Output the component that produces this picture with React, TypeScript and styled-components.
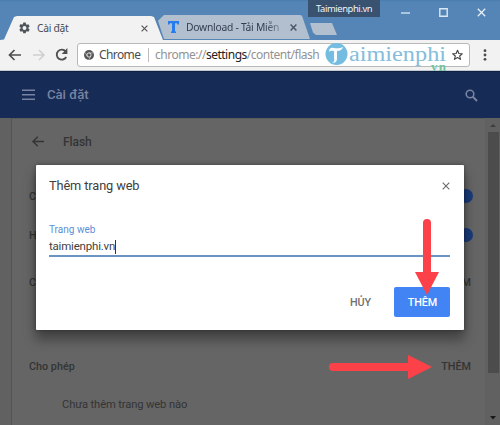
import React from "react";
import styled, { createGlobalStyle } from "styled-components";

const Global = createGlobalStyle`
  * { box-sizing: border-box; }
  body { margin: 0; overflow: hidden; font-family: Roboto, "Noto Sans", sans-serif; }
`;

const Window = styled.div`
  position: relative;
  width: 500px;
  height: 425px;
  overflow: hidden;
  display: flex;
  flex-direction: column;
  background: #656565;
`;

const TabStrip = styled.header`
  height: 40px;
  flex: none;
  display: flex;
  align-items: flex-end;
  background: linear-gradient(#4a7baf 0, #5585b7 2px, #5585b7 100%);
  font-family: "Noto Sans", "Open Sans", sans-serif;
`;

const Tab = styled.div<{ $active?: boolean }>`
  display: flex;
  align-items: center;
  flex: none;
  height: 24px;
  width: ${(p) => (p.$active ? 163 : 153)}px;
  margin-left: ${(p) => (p.$active ? 0 : -6)}px;
  margin-bottom: ${(p) => (p.$active ? 0 : 1)}px;
  padding-left: ${(p) => (p.$active ? 19 : 11)}px;
  color: ${(p) => (p.$active ? "#474b50" : "#333f50")};
  background: ${(p) => (p.$active ? "#f2f2f2" : "#b1bfcf")};
  clip-path: ${(p) =>
    p.$active
      ? "polygon(0 100%, 4px 98%, 14px 4%, 17px 0, 151px 0, 154px 4%, 163px 100%)"
      : "polygon(1px 24%, 7px 0, 143px 0, 145px 3%, 153px 100%, 7px 100%)"};
  font-size: 10.3px;
`;

const TabTitle = styled.span<{ $w: number; $fade?: boolean }>`
  width: ${(p) => p.$w}px;
  margin-left: 7px;
  white-space: nowrap;
  line-height: 20px;
  letter-spacing: ${(p) => (p.$fade ? -0.25 : -0.3)}px;
  ${(p) => p.$fade && "mask-image: linear-gradient(90deg, #000 82%, rgba(0, 0, 0, 0.3) 100%);"}
`;

const NewTab = styled.div`
  width: 27px;
  height: 12px;
  margin: 0 0 5px 0;
  background: #b1bfcf;
  clip-path: polygon(0 0, 22px 0, 27px 100%, 6px 100%, 3px 80%);
`;

const WindowControls = styled.div`
  margin-left: auto;
  align-self: flex-start;
  display: flex;
  align-items: center;
  gap: 29px;
  padding: 8px 14px 0 0;
`;

const Tooltip = styled.div`
  position: absolute;
  left: 308px;
  top: 0;
  width: 72px;
  height: 17px;
  padding-left: 8px;
  background: #39526f;
  color: #f1f4f8;
  font: 9.4px/18px "Noto Sans", sans-serif;
  letter-spacing: -0.4px;
`;

const Toolbar = styled.nav`
  height: 31px;
  flex: none;
  display: flex;
  align-items: center;
  padding: 0 0 1px 8px;
  background: #f2f2f2;
  border-bottom: 1px solid #c3cad5;
`;

const NavIcons = styled.div`
  width: 69px;
  display: flex;
  align-items: center;
  gap: 10px;
`;

const Omnibox = styled.div`
  width: 393px;
  height: 24px;
  display: flex;
  align-items: center;
  padding: 0 6px;
  background: #fff;
  border: 1px solid #b9b9b9;
  border-radius: 3px;
  font: 12px/20px "Noto Sans", "Open Sans", sans-serif;
  color: #4c4c4c;
`;

const Scheme = styled.span`
  width: 50px;
  margin-left: 5px;
  border-right: 1px solid #bdbdbd;
  line-height: 14px;
  letter-spacing: -0.6px;
`;

const Url = styled.span`
  margin-left: 6px;
  color: #929292;
  white-space: nowrap;
  letter-spacing: -0.49px;
  b { font-weight: 400; color: #222; }
`;

const Star = styled.svg`
  margin-left: auto;
`;

const Menu = styled.svg`
  margin-left: 13px;
`;

const Watermark = styled.div`
  position: absolute;
  left: 325px;
  top: 42px;
  width: 124px;
  height: 34px;
  font-family: "Liberation Serif", serif;
`;

const AppBar = styled.div`
  height: 47px;
  flex: none;
  display: flex;
  align-items: center;
  padding: 0 22px;
  background: #172b57;
  border-top: 1px solid #10203f;
  color: #7783a0;
`;

const AppTitle = styled.h1`
  margin: -2px auto 0 12px;
  font-size: 13.2px;
  font-weight: 500;
  letter-spacing: -0.05px;
`;

const Body = styled.main`
  flex: 1;
  display: flex;
  min-height: 0;
`;

const Gutter = styled.div<{ $right?: boolean }>`
  width: ${(p) => (p.$right ? 2 : 12)}px;
  background: #616161;
  border-right: ${(p) => (p.$right ? "0" : "1px solid #545454")};
`;

const Panel = styled.section`
  flex: 1;
  display: flex;
  flex-direction: column;
  padding: 0 15px 0 17px;
  border-top: 1px solid #5b5b5b;
  background: #656565;
  color: #343434;
  font-size: 12px;
`;

const Heading = styled.div`
  display: flex;
  align-items: center;
  height: 45px;
  gap: 19px;
  padding-left: 3px;
  font-size: 12px;
  font-weight: 500;
  letter-spacing: -0.05px;
`;

const Setting = styled.div<{ $h: number }>`
  display: flex;
  align-items: center;
  justify-content: space-between;
  height: ${(p) => p.$h}px;
  flex: none;
  font-weight: 500;
  font-size: 10.8px;
`;

const AddLink = styled.span`
  margin-right: -1px;
`;

const Toggle = styled.i`
  width: 14px;
  height: 14px;
  margin-right: -3px;
  border-radius: 50%;
  background: #1a3a79;
`;

const Empty = styled.div`
  padding: 0 0 0 33px;
  margin-top: -12px;
  font-size: 11.2px;
  line-height: 14px;
  letter-spacing: -0.13px;
`;

const Scrollbar = styled.div`
  width: 13px;
  display: flex;
  flex-direction: column;
  align-items: center;
  padding: 5px 1px 5px 0;
  background: #616161;
`;

const Thumb = styled.div`
  width: 11px;
  height: 241px;
  margin: 5px 0 auto;
  flex: none;
  background: #4c4c4c;
`;

const Dialog = styled.div`
  position: absolute;
  left: 36px;
  top: 165px;
  width: 428px;
  height: 165px;
  padding: 0 14px 0 13px;
  display: flex;
  flex-direction: column;
  background: #fff;
  border-radius: 1px;
  box-shadow: 0 9px 12px 1px rgba(0, 0, 0, 0.34), 0 0 4px rgba(0, 0, 0, 0.35);
`;

const DialogHead = styled.div`
  display: flex;
  align-items: center;
  justify-content: space-between;
  height: 41px;
  color: #3e3e3e;
  font-size: 12.8px;
  letter-spacing: -0.12px;
`;

const Field = styled.label`
  margin-top: 17px;
  display: flex;
  flex-direction: column;
  height: 34px;
  border-bottom: 2px solid #6b94c3;
  color: #5c8fd6;
  font-size: 10px;
  line-height: 14px;
  letter-spacing: 0.02px;
`;

const Value = styled.span`
  align-self: flex-start;
  margin-top: 3px;
  height: 14px;
  line-height: 13px;
  border-right: 1px solid #333;
  color: #3f3f3f;
  font-size: 11.5px;
  letter-spacing: -0.2px;
`;

const Actions = styled.div`
  display: flex;
  justify-content: flex-end;
  gap: 12px;
  margin-top: 30px;
`;

const Button = styled.button<{ $primary?: boolean }>`
  width: ${(p) => (p.$primary ? 56 : 44)}px;
  height: 30px;
  border: 0;
  padding: 0 0 0 1px;
  border-radius: 2px;
  background: ${(p) => (p.$primary ? "#4284f3" : "transparent")};
  color: ${(p) => (p.$primary ? "#fff" : "#707070")};
  font: 500 10.8px Roboto, sans-serif;
  letter-spacing: -0.1px;
`;

const Pointer = styled.svg<{ $x: number; $y: number }>`
  position: absolute;
  left: ${(p) => p.$x}px;
  top: ${(p) => p.$y}px;
  fill: #fd4148;
`;

const Cross = ({ size, color, width = 1.4 }: { size: number; color: string; width?: number }) => (
  <svg width={size} height={size} viewBox="0 0 8 8" stroke={color} strokeWidth={width}>
    <path d="M.7.7l6.6 6.6M7.3.7L.7 7.3" />
  </svg>
);

export default function App() {
  return (
    <>
      <Global />
      <Window>
        <TabStrip>
          <Tab $active>
            <svg width="11" height="12" viewBox="2 2 20 20" fill="#4f555b">
              <path d="M19.14 12.94c.04-.3.06-.61.06-.94s-.02-.64-.07-.94l2.03-1.58a.49.49 0 0 0 .12-.61l-1.92-3.32a.49.49 0 0 0-.59-.22l-2.39.96a7 7 0 0 0-1.62-.94l-.36-2.54A.48.48 0 0 0 13.92 2h-3.84a.48.48 0 0 0-.48.41l-.36 2.54a7 7 0 0 0-1.62.94l-2.39-.96a.49.49 0 0 0-.59.22L2.72 8.47a.49.49 0 0 0 .12.61l2.03 1.58a7 7 0 0 0 0 2.28l-2.03 1.58a.49.49 0 0 0-.12.61l1.92 3.32c.12.22.37.29.59.22l2.39-.96c.5.38 1.03.7 1.62.94l.36 2.54c.05.24.24.41.48.41h3.84c.24 0 .44-.17.48-.41l.36-2.54a7 7 0 0 0 1.62-.94l2.39.96c.22.08.47 0 .59-.22l1.92-3.32a.49.49 0 0 0-.12-.61zM12 15.6a3.6 3.6 0 1 1 0-7.2 3.6 3.6 0 0 1 0 7.2z" />
            </svg>
            <TabTitle $w={104}>Cài đặt</TabTitle>
            <Cross size={7} color="#5a5a5a" />
          </Tab>
          <Tab>
            <svg width="11" height="12" viewBox="0 0 11 12" fill="#267bed">
              <path d="M0 0h11v3.6H9.6L9 2.2H7v8l1 .6V12H3v-1.2l1-.6v-8H2l-.6 1.4H0z" />
            </svg>
            <TabTitle $w={96} $fade>Download - Tải Miễn</TabTitle>
            <svg width="15" height="7" viewBox="-8 0 15 7" stroke="#4b535f" strokeWidth="1.4">
              <path d="M.6.6l5.8 5.8M6.4.6L.6 6.4" />
            </svg>
          </Tab>
          <NewTab />
          <WindowControls>
            <svg width="9" height="9"><path d="M0 5h9" stroke="#dce8f4" strokeWidth="1.3" /></svg>
            <svg width="9" height="9"><path d="M.8.8h7.4v7.4H.8z" fill="none" stroke="#dce8f4" strokeWidth="1.4" /></svg>
            <Cross size={9} color="#e7f0f8" width={1.1} />
          </WindowControls>
        </TabStrip>
        <Tooltip>Taimienphi.vn</Tooltip>

        <Toolbar>
          <NavIcons>
            <svg width="14" height="12" fill="none" stroke="#4f4f4f" strokeWidth="1.7"><path d="M6.5 1L1.5 6l5 5M2 6h11" /></svg>
            <svg width="13" height="12" fill="none" stroke="#cfcfcf" strokeWidth="1.5"><path d="M7 1l5 5-5 5M11.5 6H1" /></svg>
            <svg width="13" height="13" fill="none" stroke="#4f4f4f" strokeWidth="1.8"><path d="M11.2 9A5 5 0 1 1 10.7 3.5" /><path d="M12.4 0v6H6.7z" fill="#4f4f4f" stroke="none" /></svg>
          </NavIcons>
          <Omnibox>
            <svg width="10" height="10" viewBox="0 0 10 10">
              <circle cx="5" cy="5" r="5" fill="#555" />
              <circle cx="5" cy="5" r="2.1" fill="#555" stroke="#fff" strokeWidth=".8" />
              <path d="M5 2.9h4.5M3.2 6L1 2.4M6.8 6L4.7 10" stroke="#ddd" strokeWidth=".6" />
            </svg>
            <Scheme>Chrome</Scheme>
            <Url>chrome://<b>settings</b>/content/flash</Url>
            <Star width="11" height="12" viewBox="0 0 12 12" fill="none" stroke="#414141" strokeWidth="1.2" strokeLinejoin="round">
              <path d="M6 .9l1.5 3.4 3.7.3-2.8 2.5.9 3.7L6 8.8l-3.3 2 .9-3.7L.8 4.6l3.7-.3z" />
            </Star>
          </Omnibox>
          <Menu width="4" height="12" fill="#4c4c4c"><circle cx="2" cy="1.7" r="1.4" /><circle cx="2" cy="6" r="1.4" /><circle cx="2" cy="10.3" r="1.4" /></Menu>
        </Toolbar>

        <AppBar>
          <svg width="13" height="12" stroke="#7783a0" strokeWidth="1.5"><path d="M0 1.3h13M0 5.8h13M0 10.3h13" /></svg>
          <AppTitle>Cài đặt</AppTitle>
          <svg width="13" height="13" fill="none" stroke="#7783a0"><circle cx="5" cy="5" r="3.8" strokeWidth="1.6" /><path d="M7.8 7.8l4.2 4.2" strokeWidth="2" /></svg>
        </AppBar>

        <Body>
          <Gutter />
          <Panel>
            <Heading>
              <svg width="12" height="11" fill="none" stroke="#343434" strokeWidth="1.4"><path d="M5.8.7L1 5.5l4.8 4.8M1 5.5h11" /></svg>
              Flash
            </Heading>
            <Setting $h={64}>C<Toggle /></Setting>
            <Setting $h={14}>H<Toggle /></Setting>
            <Setting $h={81}>C<AddLink>THÊM</AddLink></Setting>
            <Setting $h={87}>Cho phép<AddLink>THÊM</AddLink></Setting>
            <Empty>Chưa thêm trang web nào</Empty>
          </Panel>
          <Gutter $right />
          <Scrollbar>
            <svg width="6" height="4" fill="#3d3d3d"><path d="M0 4l3-3 3 3z" /></svg>
            <Thumb />
            <svg width="6" height="4" fill="#181818"><path d="M0 0l3 3.5L6 0z" /></svg>
          </Scrollbar>
        </Body>

        <Dialog role="dialog">
          <DialogHead>Thêm trang web<Cross size={8} color="#6c6c6c" width={1.1} /></DialogHead>
          <Field>Trang web<Value>taimienphi.vn</Value></Field>
          <Actions>
            <Button>HỦY</Button>
            <Button $primary>THÊM</Button>
          </Actions>
        </Dialog>

        <Watermark>
          <svg width="124" height="34">
            <circle cx="11.5" cy="12" r="11" fill="#74bde1" />
            <path d="M4 10q0-5 5-4 5 1 9-1-1 4-6 4v8q0 4-5 4 3-1 2-5V9q-4-1-5 1z" fill="#f8fcff" />
            <text x="24" y="19" fontSize="20" fill="#85bddb" textLength="97" lengthAdjust="spacingAndGlyphs">aimienphi</text>
            <text x="106" y="29" fontSize="13" fontWeight="700" fill="#6fc5a0" textLength="15">vn</text>
          </svg>
        </Watermark>
        <Pointer $x={415} $y={219} width="24" height="76"><rect x="8" width="8" height="60" rx="4" /><path d="M0 53h24l-12 23z" /></Pointer>
        <Pointer $x={329} $y={355} width="103" height="25"><rect y="8" width="85" height="8" rx="4" /><path d="M79 0v24l24-12z" /></Pointer>
      </Window>
    </>
  );
}
